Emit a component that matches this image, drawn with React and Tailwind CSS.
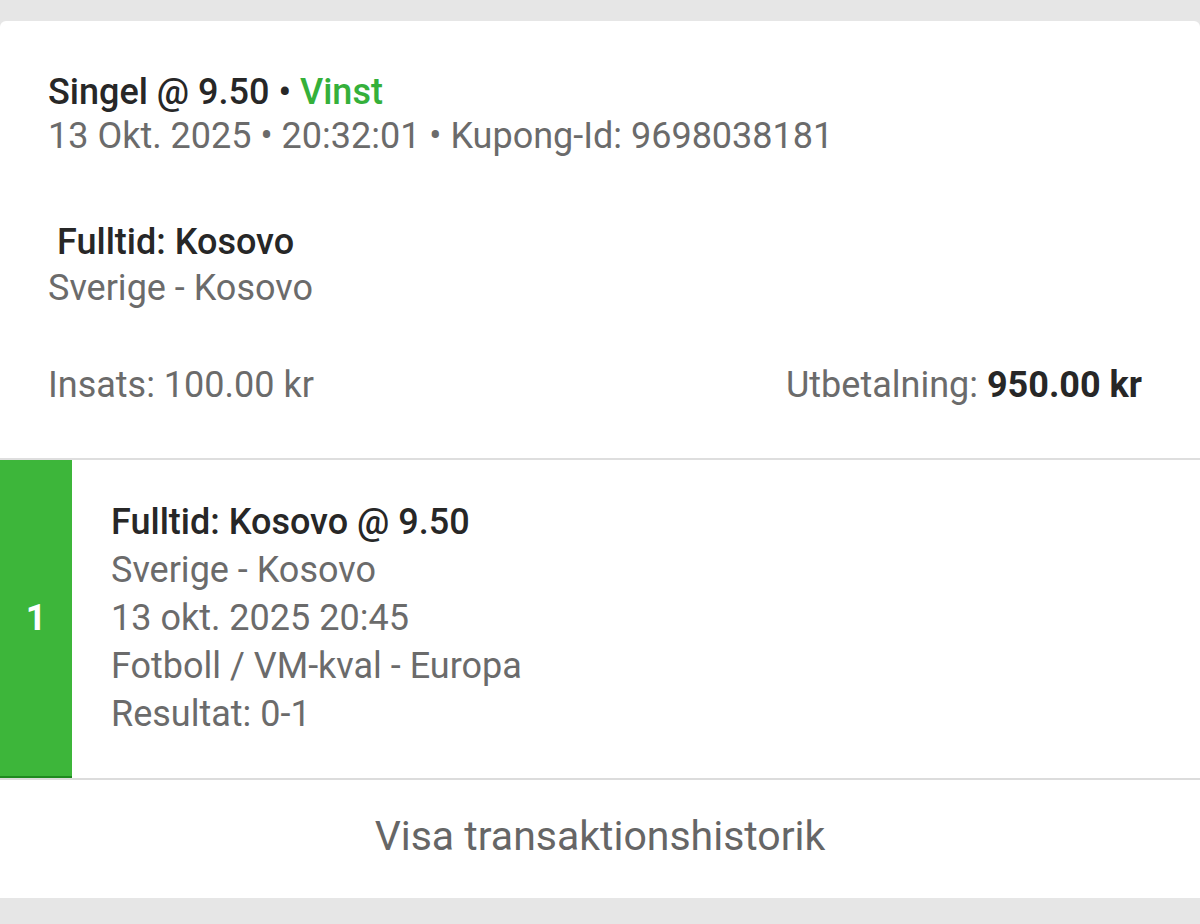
export default function App() {
  return (
    <div
      className="w-[1200px] h-[924px] bg-[#e6e6e6] pt-[21px] overflow-hidden"
      style={{ fontFamily: 'Roboto, "Noto Sans", sans-serif' }}
    >
      <div className="bg-white rounded-t-[6px] h-[439px] border-b-2 border-[#dedede] flex flex-col pl-[48px] pr-[58px]">
        <div className="pt-[49px] text-[36px] leading-[44px]">
          <div className="text-[#272727] font-medium">
            Singel @ 9.50 • <span className="text-[#35b03a]">Vinst</span>
          </div>
          <div className="text-[#6b6b6b]">13 Okt. 2025 • 20:32:01 • Kupong-Id: 9698038181</div>
        </div>
        <div className="pt-[61px] text-[36px] leading-[46px]">
          <div className="text-[#272727] font-medium pl-[9px]">Fulltid: Kosovo</div>
          <div className="text-[#6b6b6b]">Sverige - Kosovo</div>
        </div>
        <div className="pt-[51px] flex justify-between text-[36px] leading-[46px] text-[#6b6b6b]">
          <div>Insats: 100.00 kr</div>
          <div>
            Utbetalning: <span className="font-bold text-[#272727]">950.00 kr</span>
          </div>
        </div>
      </div>
      <div className="bg-white flex h-[320px] border-b-2 border-[#dcdcdc]">
        <div className="w-[72px] bg-[#3db63a] border-b-2 border-[#1f8a1f] flex items-center justify-center text-white font-bold text-[36px]">
          1
        </div>
        <div className="pl-[39px] pt-[38px] text-[36px] leading-[48px] text-[#6b6b6b]">
          <div className="text-[#272727] font-medium">Fulltid: Kosovo @ 9.50</div>
          <div>Sverige - Kosovo</div>
          <div>13 okt. 2025 20:45</div>
          <div>Fotboll / VM-kval - Europa</div>
          <div>Resultat: 0-1</div>
        </div>
      </div>
      <div className="bg-white h-[118px] flex items-center justify-center pb-[4px] text-[#666666] text-[41px]">
        Visa transaktionshistorik
      </div>
    </div>
  );
}
